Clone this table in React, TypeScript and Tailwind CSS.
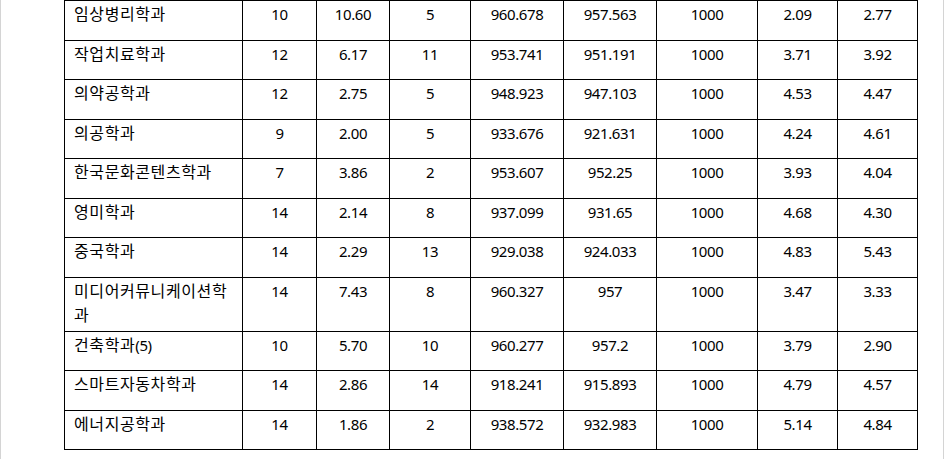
import React from "react";

type Row = [string, string, string, string, string, string, string, string, string];

const rows: Row[] = [
  ["임상병리학과", "10", "10.60", "5", "960.678", "957.563", "1000", "2.09", "2.77"],
  ["작업치료학과", "12", "6.17", "11", "953.741", "951.191", "1000", "3.71", "3.92"],
  ["의약공학과", "12", "2.75", "5", "948.923", "947.103", "1000", "4.53", "4.47"],
  ["의공학과", "9", "2.00", "5", "933.676", "921.631", "1000", "4.24", "4.61"],
  ["한국문화콘텐츠학과", "7", "3.86", "2", "953.607", "952.25", "1000", "3.93", "4.04"],
  ["영미학과", "14", "2.14", "8", "937.099", "931.65", "1000", "4.68", "4.30"],
  ["중국학과", "14", "2.29", "13", "929.038", "924.033", "1000", "4.83", "5.43"],
  ["미디어커뮤니케이션학과", "14", "7.43", "8", "960.327", "957", "1000", "3.47", "3.33"],
  ["건축학과(5)", "10", "5.70", "10", "960.277", "957.2", "1000", "3.79", "2.90"],
  ["스마트자동차학과", "14", "2.86", "14", "918.241", "915.893", "1000", "4.79", "4.57"],
  ["에너지공학과", "14", "1.86", "2", "938.572", "932.983", "1000", "5.14", "4.84"],
];

const widths = ["w-[178px]", "w-[74px]", "w-[73px]", "w-[81px]", "w-[93px]", "w-[93px]", "w-[101px]", "w-[80px]", "w-[80px]"];

function DeptName({ name }: { name: string }) {
  // "(5)" style suffixes sit at the number size, not the hangul size
  const [main, suffix] = name.split(/(?=\()/);
  return (
    <>
      {main}
      {suffix && <span className="text-[15px] tracking-[-0.4px]">{suffix}</span>}
    </>
  );
}

export default function App() {
  return (
    <div className="w-[944px] h-[459px] overflow-hidden bg-white border-x border-[#d4d4d4] font-['Noto_Sans','Noto_Sans_CJK_KR',sans-serif] text-[15px] leading-[24px] text-black">
      <table className="ml-[63px] w-[854px] table-fixed border-collapse">
        <colgroup>
          {widths.map((w, i) => (
            <col key={i} className={w} />
          ))}
        </colgroup>
        <tbody>
          {rows.map((r) => (
            <tr key={r[0]}>
              <td className="h-[39.5px] border border-black align-top pt-px pb-[4px] px-[9px] text-[16px] tracking-[0.6px]">
                <DeptName name={r[0]} />
              </td>
              {r.slice(1).map((v, i) => (
                <td key={i} className="h-[39.5px] border border-black align-top pt-px pb-[4px] px-1 text-center tracking-[-0.4px]">
                  {v}
                </td>
              ))}
            </tr>
          ))}
        </tbody>
      </table>
    </div>
  );
}
